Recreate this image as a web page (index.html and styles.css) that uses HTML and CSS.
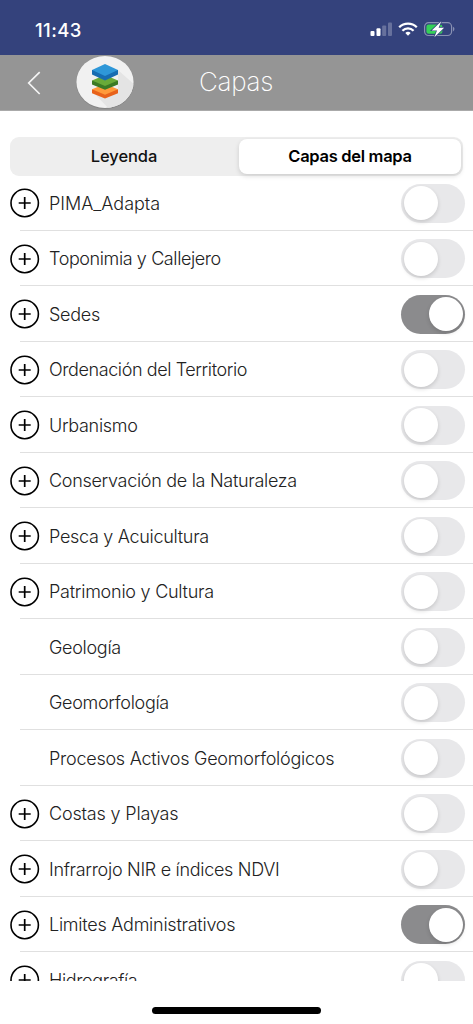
FILE: index.html
```
<!DOCTYPE html>
<html lang="es">
<head>
<meta charset="utf-8">
<title>Capas</title>
<link rel="stylesheet" href="styles.css">
</head>
<body>
<svg class="defs" width="0" height="0"><defs>
<symbol id="plus" viewBox="0 0 30 30"><circle cx="14.7" cy="15" r="13.7" fill="none" stroke="#000" stroke-width="1.6"/><path d="M14.700 9v12M8.700 15h12" stroke="#000" stroke-width="1.7" fill="none"/></symbol>
</defs></svg>
<div class="screen">
<div class="status">
<span class="time">11:43</span>
<svg class="indicators" width="88" height="20" viewBox="0 0 88 20">
<g fill="#fff"><rect x="0.5" y="11" width="4" height="5" rx="1"/><rect x="6.5" y="8.3" width="4" height="7.7" rx="1"/><g opacity=".25"><rect x="12.2" y="5.5" width="4" height="10.5" rx="1"/><rect x="18" y="2.5" width="4" height="13.5" rx="1"/></g>
<path d="M38 15.8l-2.7-2.8a4 4 0 0 1 5.4 0z"/></g>
<g fill="none" stroke="#fff" stroke-width="2.3"><path d="M32.4 10.7a8 8 0 0 1 11.2 0"/><path d="M29.2 7.200a12.600 12.600 0 0 1 17.600 0"/></g>
<rect x="54.6" y="2.700" width="27" height="12.800" rx="4" fill="none" stroke="#fff" stroke-opacity=".42" stroke-width="1.2"/>
<path d="M83.2 6.700a3 3 0 0 1 0 4.800z" fill="#fff" opacity=".5"/>
<rect x="56.4" y="4.400" width="16" height="9.400" rx="2.300" fill="#34d158"/>
<path d="M71.300 1.200l-9.600 9.200h5.300l-2.600 6.900 9.700-9.500h-5.500z" fill="#fff" stroke="#34427c" stroke-width="1.400" paint-order="stroke"/>
</svg>
</div>
<header class="nav">
<svg class="back" width="14" height="24" viewBox="0 0 14 24"><path d="M12.700 1.200L1.700 12l11 11" fill="none" stroke="#fff" stroke-opacity=".9" stroke-width="1.700"/></svg>
<svg class="logo" width="60" height="56" viewBox="0 0 60 56">
<defs><clipPath id="disc"><ellipse cx="30" cy="27" rx="28.600" ry="26"/></clipPath></defs>
<ellipse cx="30" cy="27.400" rx="29" ry="26.500" fill="#858585"/>
<ellipse cx="30" cy="27" rx="28.600" ry="26" fill="#f1f1f1"/>
<path clip-path="url(#disc)" d="M43 15L62 32V56H36L18 37l25-3z" fill="#e4e4e4"/>
<path d="M17 34.300v4L30 43.500l13-5.200v-4z" fill="#e8621b"/><path d="M17 34.300L30 29l13 5.300L30 39.700z" fill="#ff9a3a"/>
<path d="M17 25.500v4L30 34.800l13-5.300v-4z" fill="#3b7a24"/><path d="M17 25.500L30 20l13 5.500L30 31z" fill="#69aa38"/>
<path d="M17 15v4.600L30 25.500l13-5.900V15z" fill="#176cb1"/><path d="M17 15L30 9l13 6-13 6z" fill="#2e97d8"/>
</svg>
<h1 class="title">Capas</h1>
</header>
<main class="content">
<div class="segments"><div class="segment">Leyenda</div><div class="segment selected">Capas del mapa</div></div>
<div class="list">
<div class="row"><svg class="add"><use href="#plus"/></svg><div class="cell"><span class="label wide">PIMA_Adapta</span><i class="switch"></i></div></div>
<div class="row"><svg class="add"><use href="#plus"/></svg><div class="cell"><span class="label narrow">Toponimia y Callejero</span><i class="switch"></i></div></div>
<div class="row"><svg class="add"><use href="#plus"/></svg><div class="cell"><span class="label">Sedes</span><i class="switch on"></i></div></div>
<div class="row"><svg class="add"><use href="#plus"/></svg><div class="cell"><span class="label narrow">Ordenación del Territorio</span><i class="switch"></i></div></div>
<div class="row"><svg class="add"><use href="#plus"/></svg><div class="cell"><span class="label">Urbanismo</span><i class="switch"></i></div></div>
<div class="row"><svg class="add"><use href="#plus"/></svg><div class="cell"><span class="label">Conservación de la Naturaleza</span><i class="switch"></i></div></div>
<div class="row"><svg class="add"><use href="#plus"/></svg><div class="cell"><span class="label">Pesca y Acuicultura</span><i class="switch"></i></div></div>
<div class="row"><svg class="add"><use href="#plus"/></svg><div class="cell"><span class="label loose">Patrimonio y Cultura</span><i class="switch"></i></div></div>
<div class="row"><div class="add"></div><div class="cell"><span class="label">Geología</span><i class="switch"></i></div></div>
<div class="row"><div class="add"></div><div class="cell"><span class="label">Geomorfología</span><i class="switch"></i></div></div>
<div class="row"><div class="add"></div><div class="cell"><span class="label loose">Procesos Activos Geomorfológicos</span><i class="switch"></i></div></div>
<div class="row"><svg class="add"><use href="#plus"/></svg><div class="cell"><span class="label wider">Costas y Playas</span><i class="switch"></i></div></div>
<div class="row"><svg class="add"><use href="#plus"/></svg><div class="cell"><span class="label">Infrarrojo NIR e índices NDVI</span><i class="switch"></i></div></div>
<div class="row"><svg class="add"><use href="#plus"/></svg><div class="cell"><span class="label loose">Limites Administrativos</span><i class="switch on"></i></div></div>
<div class="row"><svg class="add"><use href="#plus"/></svg><div class="cell"><span class="label narrow">Hidrografía</span><i class="switch"></i></div></div>
</div>
</main>
<div class="home"></div>
</div>
</body>
</html>
```
FILE: styles.css
```
* { box-sizing: border-box; }
body { margin: 0; background: #fff; color: #222; font-family: Inter, "Liberation Sans", sans-serif; }
.defs { display: block; height: 0; }
.screen { height: 1024px; overflow: hidden; display: flex; flex-direction: column; }
.status { height: 55px; flex: none; background: #34427c; color: #fff; display: flex; justify-content: space-between; padding: 20px 15px 0 35px; }
.time { font-size: 18.5px; line-height: 20px; font-weight: 500; letter-spacing: .4px; }
.indicators { display: block; }
.nav { height: 56px; flex: none; background: #959595; display: flex; align-items: flex-start; padding-left: 27px; border-bottom: 1px solid #aaa; }
.back { margin-top: 16px; }
.logo { margin-left: 34px; }
.title { margin: 9px 0 0 64px; font-size: 26px; line-height: 36px; font-weight: 200; color: #fff; letter-spacing: -.3px; }
.content { height: 870px; flex: none; overflow: hidden; padding-top: 26px; }
.segments { width: 453px; height: 39px; margin-left: 10px; padding: 2px; background: #eee; border-radius: 9px; display: flex; }
.segment { flex: 0 0 227px; text-align: center; font-size: 16.5px; line-height: 35px; font-weight: 500; color: #111; letter-spacing: -.1px; padding-right: 3px; }
.segment.selected { flex: 0 0 222px; background: #fff; border-radius: 8px; font-weight: 600; box-shadow: 0 2px 5px rgba(0,0,0,.14); color: #000; letter-spacing: -.3px; padding-right: 0; }
.list { display: flex; flex-direction: column; margin-top: -.6px; }
.row { height: 55.5px; flex: none; display: flex; align-items: center; padding-left: 10px; background: linear-gradient(#e0e0e0, #e0e0e0) 20px 100% / 100% 1px no-repeat; }
.add { width: 30px; height: 30px; flex: none; margin-right: 9px; }
.cell { flex: 1; display: flex; align-items: center; justify-content: space-between; padding-right: 8px; }
.label { font-size: 18px; line-height: 26px; font-weight: 300; white-space: nowrap; letter-spacing: -.3px; padding-top: 1px; }
.label.narrow { letter-spacing: -.4px; }
.label.loose { letter-spacing: -.25px; }
.label.wide { letter-spacing: -.02px; }
.label.wider { letter-spacing: -.17px; }
.switch { width: 64px; height: 39px; border-radius: 20px; background: #e8e8ea; padding: 2.5px; display: flex; }
.switch::after { content: ""; width: 34px; height: 34px; border-radius: 50%; background: #fff; box-shadow: 0 2px 4px rgba(0,0,0,.15); }
.switch.on { background: #8b8b8d; justify-content: flex-end; }
.home { width: 169px; height: 7px; border-radius: 4px; background: #000; margin: 26px 0 0 152px; flex: none; }
```
